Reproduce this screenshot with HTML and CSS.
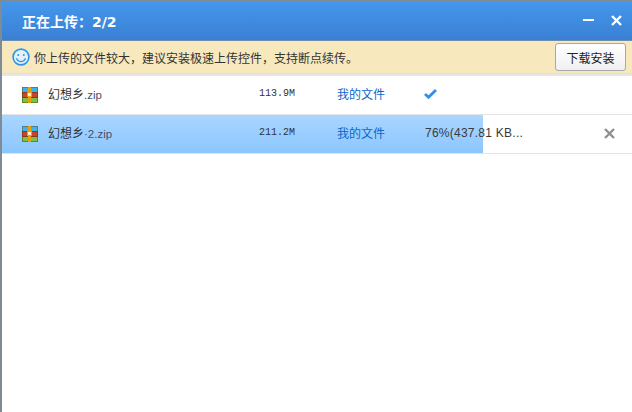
FILE: index.html
```html
<!DOCTYPE html>
<html lang="zh">
<head>
<meta charset="utf-8">
<title>正在上传</title>
<link rel="stylesheet" href="styles.css">
</head>
<body>
<div class="window">
  <header class="titlebar">
    <h1 class="title">正在上传：<span class="count">2/2</span></h1>
    <div class="controls">
      <svg class="ctl" width="11" height="11" viewBox="0 0 11 11"><rect x="0" y="4" width="11" height="2" fill="#fff"/></svg>
      <svg class="ctl" width="11" height="11" viewBox="0 0 11 11"><path d="M1 1l9 9M10 1l-9 9" stroke="#fff" stroke-width="2.400" fill="none"/></svg>
    </div>
  </header>
  <div class="notice">
    <svg class="smile" width="18" height="18" viewBox="0 0 18 18"><circle cx="9" cy="9" r="7.900" fill="#e4f1fb" stroke="#2d95ea" stroke-width="1.600"/><circle cx="6.200" cy="7" r="1" fill="#2d95ea"/><circle cx="11.800" cy="7" r="1" fill="#2d95ea"/><path d="M4.500 10.200c1 2.600 2.800 3.400 4.500 3.400s3.500-.8 4.500-3.400" stroke="#2d95ea" stroke-width="1.300" fill="none"/></svg>
    <span class="notice-text">你上传的文件较大，建议安装极速上传控件，支持断点续传。</span>
    <button class="install">下载安装</button>
  </div>
  <ul class="files">
    <li class="file">
      <svg class="zip" width="16" height="16" viewBox="0 0 16 16"><use href="#zipicon"/></svg>
      <span class="name">幻想乡<i class="ext">.zip</i></span>
      <span class="size">113.9M</span>
      <a class="dest">我的文件</a>
      <span class="status"><svg class="check" width="13" height="10" viewBox="0 0 13 10"><path d="M1 5l3.500 3.300 7.500-7.300" stroke="#2f8fee" stroke-width="2.800" fill="none"/></svg></span>
    </li>
    <li class="file active">
      <div class="fill" style="width:481px"></div>
      <svg class="zip" width="16" height="16" viewBox="0 0 16 16"><use href="#zipicon"/></svg>
      <span class="name">幻想乡<i class="ext">·2.zip</i></span>
      <span class="size">211.2M</span>
      <a class="dest">我的文件</a>
      <span class="status progress">76%(437.81 KB...</span>
      <svg class="remove" width="11" height="11" viewBox="0 0 11 11"><path d="M1 1l9 9M10 1l-9 9" stroke="#8f8f8f" stroke-width="2.400" fill="none"/></svg>
    </li>
  </ul>
</div>
<svg class="defs" width="0" height="0">
  <symbol id="zipicon" viewBox="0 0 16 16">
    <rect width="16" height="16" fill="#4f7f8f"/>
    <rect x="1" y="1" width="14" height="4" fill="#3db4e6"/>
    <rect x="0" y="5" width="16" height="6" fill="#8a3a20"/>
    <rect x="1" y="6" width="14" height="4" fill="#c9442a"/>
    <rect x="0" y="11" width="16" height="5" fill="#5d8a2a"/>
    <rect x="1" y="11" width="14" height="4" fill="#7cc23f"/>
    <rect x="6" y="0" width="3" height="16" fill="#e8a010"/>
    <rect x="5" y="5" width="5" height="5" fill="#e8a010"/>
    <rect x="6" y="6" width="3" height="3" fill="#fff3d0"/>
  </symbol>
</svg>
</body>
</html>
```
FILE: styles.css
```css
* { box-sizing: border-box; }
html, body { margin: 0; padding: 0; height: 100%; background: #fff; overflow: hidden; }
body { font-family: "Noto Sans CJK SC", "Liberation Sans", sans-serif; font-size: 12px; color: #333; }
.window { height: 412px; border-left: 2px solid #7f8b96; border-top: 1px solid #7f8b96; display: flex; flex-direction: column; }
.titlebar { height: 40px; flex: none; display: flex; align-items: center; justify-content: space-between; padding: 0 10px 0 20px; background: linear-gradient(#4497ee, #3a80d2); border-bottom: 1px solid #6e8db0; }
.title { margin: 0; color: #fff; font-size: 14px; font-weight: 700; font-family: "Noto Sans CJK SC", sans-serif; }
.count { font-family: "DejaVu Sans", sans-serif; }
.controls { display: flex; gap: 17px; }
.notice { height: 33px; flex: none; display: flex; align-items: center; padding: 0 6px 0 10px; background: #f7e9bd; border-bottom: 1px solid #efe1b0; }
.notice-text { margin-left: 4px; padding-top: 1px; color: #333; flex: 1; }
.install { width: 71px; height: 28px; padding: 0; font: inherit; color: #222; background: linear-gradient(#fff, #f0f0f0); border: 1px solid #a8a8a8; border-radius: 3px; }
.files { list-style: none; margin: 0; padding: 0; border-top: 2px solid #e6e6e6; }
.file { position: relative; height: 39px; display: flex; align-items: center; padding-left: 20px; border-bottom: 1px solid #e4e4e4; }
.fill { position: absolute; left: 0; top: 0; bottom: 0; background: linear-gradient(#a9d6ff, #8cc6ff); }
.zip { position: relative; flex: none; }
.name { position: relative; width: 211px; margin-left: 10px; margin-bottom: 4px; flex: none; color: #333; }
.ext { font-style: normal; font-size: 11.5px; font-family: "Liberation Sans", sans-serif; color: #44506a; }
.size { position: relative; width: 78px; flex: none; margin-bottom: 3px; font-family: "Liberation Mono", monospace; font-size: 10px; color: #333; }
.dest { position: relative; width: 88px; flex: none; margin-bottom: 3px; color: #0a66c8; }
.status { position: relative; width: 110px; flex: none; display: flex; align-items: center; margin-bottom: 2px; }
.progress { font-family: "Liberation Sans", sans-serif; color: #3a3a3a; letter-spacing: .25px; }
.check { margin-left: -1px; }
.remove { position: absolute; right: 17px; top: 13px; }
.defs { position: absolute; }
```
